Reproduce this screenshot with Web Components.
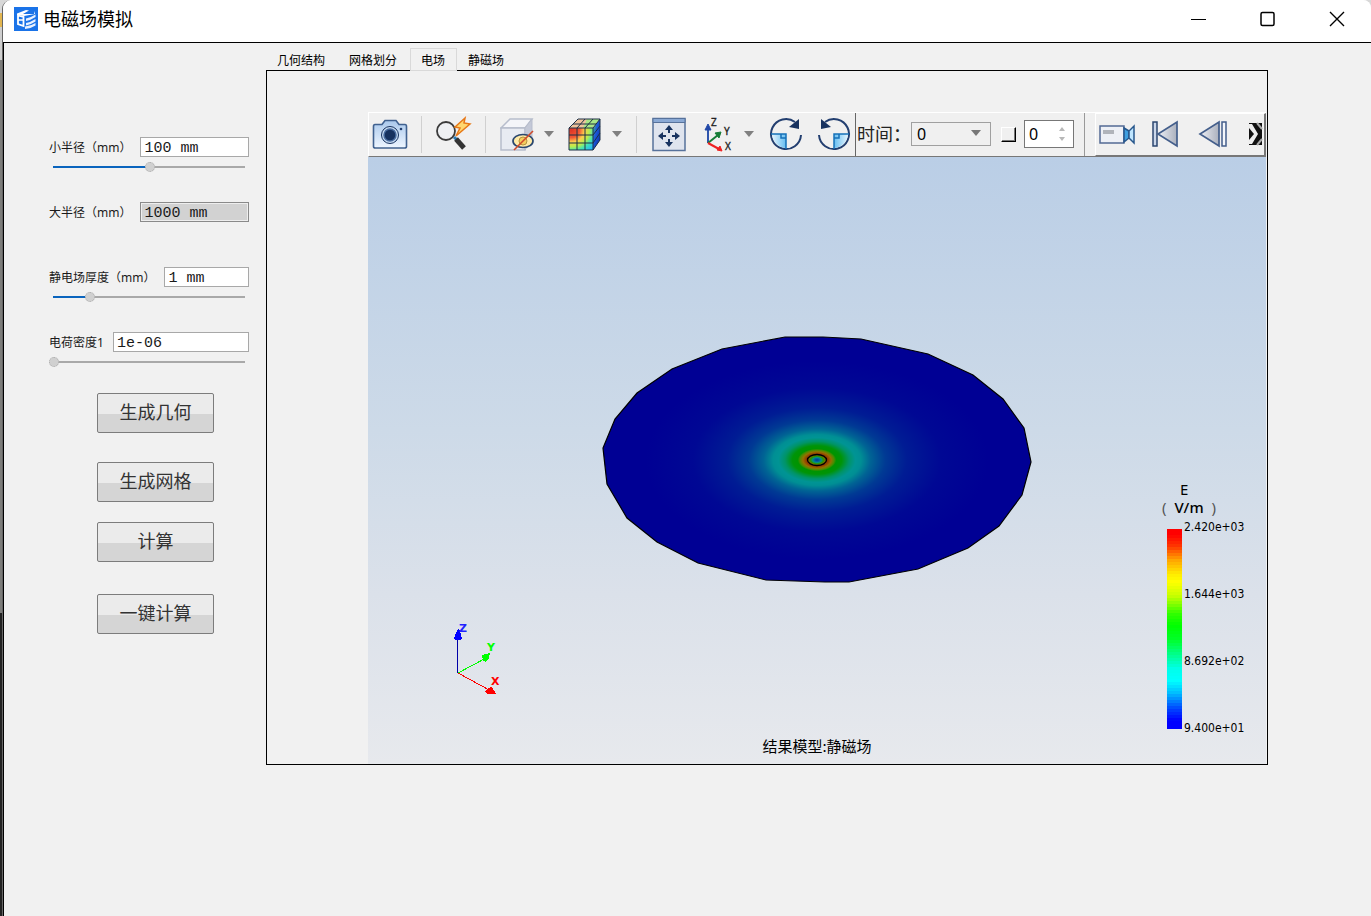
<!DOCTYPE html>
<html lang="zh-CN">
<head>
<meta charset="utf-8">
<title>电磁场模拟</title>
<style>
html, body { margin: 0; min-height: 100vh; }
body {
  display: flex;
  font-family: "Noto Sans", "Noto Sans CJK SC", sans-serif;
  font-size: 12px;
  color: #1a1a1a;
  background: linear-gradient(#d8d8d8 0 13px, #e3b650 13px 27px, #cfcfcf 27px 60px, #7d7d7b 60px 613px, #222 613px);
}
app-window { flex: 1; margin-left: 2px; }
</style>
</head>
<body>
<app-window heading="电磁场模拟">
  <control-panel slot="side">
    <number-field label="小半径（mm）" value="100 mm" position="96"></number-field>
    <number-field label="大半径（mm）" value="1000 mm" readonly></number-field>
    <number-field label="静电场厚度（mm）" value="1 mm" position="36"></number-field>
    <number-field label="电荷密度1" value="1e-06" position="0"></number-field>
    <push-button slot="actions">生成几何</push-button>
    <push-button slot="actions" style="--space:29px">生成网格</push-button>
    <push-button slot="actions" style="--space:20px">计算</push-button>
    <push-button slot="actions" style="--space:32px">一键计算</push-button>
  </control-panel>
  <tab-panel tabs="几何结构,网格划分,电场,静磁场" active="2">
    <view-toolbar></view-toolbar>
    <result-view>
      <color-legend slot="legend" values="2.420e+03,1.644e+03,8.692e+02,9.400e+01"></color-legend>
      <span slot="caption">结果模型:静磁场</span>
    </result-view>
  </tab-panel>
</app-window>

<script>
class Base extends HTMLElement {
  connectedCallback() {
    if (this.shadowRoot) return;
    const root = this.attachShadow({ mode: 'open' });
    root.innerHTML = '<style>*{box-sizing:border-box}button,input,select{font:inherit;color:inherit;margin:0}svg{display:block}' + this.css() + '</style>' + this.html();
  }
}

customElements.define('app-window', class extends Base {
  css() { return `
    :host { display:flex; flex-direction:column; min-height:100vh; box-sizing:border-box; background:#f1f1f1; border-left:1px solid #666; border-radius:9px 8px 0 0; overflow:hidden; }
    header { display:flex; align-items:center; height:42px; background:#fff; padding-left:11px; box-sizing:content-box; border-bottom:1px solid #000; }
    h1 { flex:1; margin:0 0 4px 5px; font-size:18px; line-height:24px; font-weight:400; color:#000; }
    .logo { margin-bottom:4px; }
    header button { width:69px; height:38px; margin-bottom:4px; padding:0; border:0; background:none; display:grid; place-items:center; }
    main { flex:1; display:flex; align-items:flex-start; border-left:1px solid #000; }
    .side { width:262px; }
    .content { flex:1; min-width:0; margin:5px 103px 0 0; }
  `; }
  html() { return `
    <header>
      <svg class="logo" width="24" height="24" viewBox="0 0 24 24"><rect width="24" height="24" fill="#1a73e8"/><path d="M3 6.500 12 3l3 .5-6 3.500h11l1-3v3L10 9 3 8z" fill="#fff"/><path d="M4 8.500 9.500 10v9L4 17z" fill="none" stroke="#fff" stroke-width="1.800"/><path d="M4 13h5" stroke="#fff" stroke-width="1.500"/><path d="M12 11.500q5-1 9.500-4v2.500q-4.500 3-9.500 4zM12 16q5-1 9.500-4v2.500q-4.500 3-9.500 4zM11 19.500q6-.5 10.500-3.500v2.500q-4.500 3-10.500 3.500z" fill="#e8f1ff"/></svg>
      <h1>${this.getAttribute('heading')}</h1>
      <button aria-label="最小化"><svg width="16" height="16" viewBox="0 0 16 16"><path d="M0 8.500h15" stroke="#000"/></svg></button>
      <button aria-label="最大化"><svg width="16" height="16" viewBox="0 0 16 16"><rect x="1" y="1.500" width="13" height="13" rx="1.500" fill="none" stroke="#000" stroke-width="1.500"/></svg></button>
      <button aria-label="关闭"><svg width="16" height="16" viewBox="0 0 16 16"><path d="m1 1 14 14M15 1 1 15" stroke="#000" stroke-width="1.400"/></svg></button>
    </header>
    <main><div class="side"><slot name="side"></slot></div><div class="content"><slot></slot></div></main>`; }
});

customElements.define('control-panel', class extends Base {
  css() { return `
    :host { display:block; padding:94px 17px 0 45px; }
    .actions { display:flex; flex-direction:column; align-items:center; padding:0 0 0 13px; margin-top:-4px; }
  `; }
  html() { return '<slot></slot><div class="actions"><slot name="actions"></slot></div>'; }
});

customElements.define('number-field', class extends Base {
  css() { return `
    :host { display:block; height:65px; }
    .row { display:flex; align-items:flex-start; gap:9px; }
    label { line-height:20px; white-space:nowrap; padding-top:1px; }
    .text { flex:1; min-width:0; height:20px; border:1px solid #a8a8a8; border-radius:0; background:#fff; padding:3px 3px 0; font:15px/17px "Liberation Mono","Noto Sans CJK SC",monospace; outline:0; }
    .text:read-only { background:#d2d2d2; border-color:#8a8a8a; box-shadow:inset 0 0 0 1px #eee; }
    .range { appearance:none; display:block; width:100%; height:12px; margin-top:3px; outline:0;
      background:linear-gradient(#0a64bd,#0a64bd) 4px 5px / var(--fill) 2px no-repeat, linear-gradient(#a9a9a9,#a9a9a9) 4px 5px / calc(100% - 8px) 2px no-repeat; }
    .range::-webkit-slider-thumb { appearance:none; width:10px; height:10px; border:1px dotted #aaa; border-radius:50%; background:#d0d0d0; }
  `; }
  html() {
    const ro = this.hasAttribute('readonly'), pos = this.getAttribute('position');
    return `<div class="row"><label for="v">${this.getAttribute('label')}</label><input class="text" id="v" value="${this.getAttribute('value')}" ${ro ? 'readonly' : ''}></div>` +
      (pos === null ? '' : `<input class="range" type="range" min="0" max="190" value="${pos}" aria-label="${this.getAttribute('label')}" style="--fill:${pos}px">`);
  }
});

customElements.define('push-button', class extends Base {
  css() { return `
    :host { display:block; margin-top:var(--space,0); }
    button { width:117px; height:40px; padding:0 0 2px; border:1px solid #7c7c7c; border-radius:2px; font-size:18px; line-height:24px; color:#333; background:linear-gradient(#ebebeb 0 52%, #d5d5d5 52%); }
  `; }
  html() { return '<button><slot></slot></button>'; }
});

customElements.define('tab-panel', class extends Base {
  css() { return `
    :host { display:block; }
    nav { display:flex; height:22px; }
    nav button { padding:2px 13px 0 11px; height:23px; border:0; background:none; line-height:21px; white-space:nowrap; color:#000; }
    nav button[aria-selected=true] { position:relative; padding:1px 11px 0 10px; border:1px solid #d9d9d9; background:#f1f1f1; }
    .frame { border:1px solid #000; padding:41px 1px 0 101px; }
  `; }
  html() {
    const active = +this.getAttribute('active');
    return `<nav role="tablist">${this.getAttribute('tabs').split(',').map((t, i) => `<button role="tab" aria-selected="${i === active}">${t}</button>`).join('')}</nav><div class="frame"><slot></slot></div>`;
  }
});

customElements.define('view-toolbar', class extends Base {
  css() { return `
    :host { display:flex; align-items:center; height:45px; box-sizing:border-box; border:solid; border-width:1px 0 1px 1px; border-color:#fff #fff #777 #fff; background:#f0f0f0; overflow:hidden; }
    button, label, .field { margin-bottom:2px; }
    button { flex:none; width:36px; height:36px; padding:0; border:0; background:none; }
    .cam { margin-left:3px; }
    .caret { width:26px; display:grid; place-items:center; margin-right:6px; }
    .gap { margin-right:12px; }
    hr { flex:none; width:1px; height:37px; border:0; margin:0 14px 0 13px; background:#d0d0d0; }
    .caret + hr { margin:0 15px 0 0; }
    hr.line { height:100%; margin:0 1px 0 3px; background:#666; }
    hr.thin { height:100%; margin:0 10px; background:#999; }
    label { font-size:18px; line-height:24px; white-space:nowrap; color:#222; }
    .field { position:relative; flex:none; font-size:16px; color:#000; }
    .field svg { position:absolute; pointer-events:none; }
    select { appearance:none; display:block; width:80px; height:24px; padding:0 5px; border:1px solid #a0a0a0; border-radius:0; background:#f0f0f0; }
    .field.pick svg { right:9px; top:8px; }
    .tick { appearance:none; flex:none; width:15px; height:15px; margin:0 8px 0 10px; border:solid; border-width:1px; border-color:#fff #000 #000 #fff; box-shadow:inset -1px -1px #777; background:#f0f0f0; }
    .num { display:block; width:50px; height:28px; padding:0 4px; border:1px solid #777; background:#fff; appearance:textfield; }
    .num::-webkit-inner-spin-button { appearance:none; }
    .field.spin svg { right:8px; top:6px; }
    .player { flex:1; min-width:0; height:43px; display:flex; align-items:center; gap:12px; padding-left:3px; overflow:hidden; border:solid; border-width:1px 2px 1px 1px; border-color:#fff #777 #777 #fff; }
  `; }
  html() {
    const navy = '#233f70';
    const btn = (label, body, cls = '') => `<button class="${cls}" aria-label="${label}"><svg width="36" height="36" viewBox="0 0 36 36" fill="none">${body}</svg></button>`;
    const caret = '<button class="caret" aria-label="更多"><svg width="12" height="6" viewBox="0 0 12 6"><path d="M1 0h10L6 6z" fill="#808080"/></svg></button>';
    const turn = `<path d="M33 19A15 15 0 1 1 27 6" stroke="${navy}" stroke-width="2"/><path d="M31 3v10l-10-2z" fill="#17325f"/><path d="M4 18h14v14A15 15 0 0 1 4 18z" fill="url(#ice)"/><path d="M3 18h15v15M13 18v4h5" stroke="#1671b8" stroke-width="1.500"/>`;
    return `
    <svg width="0" height="0" style="position:absolute"><defs>
      <linearGradient id="ice"><stop stop-color="#e4f5ff"/><stop offset="1" stop-color="#66bdf0"/></linearGradient>
      <linearGradient id="steel"><stop stop-color="#eef0f5"/><stop offset="1" stop-color="#aab0bd"/></linearGradient>
      <linearGradient id="cam" x2="0" y2="1"><stop stop-color="#a9c8ec"/><stop offset="1" stop-color="#eef6ff"/></linearGradient>
      <radialGradient id="heat" cx=".1" cy=".1" r="1.200"><stop stop-color="#df3527"/><stop offset=".28" stop-color="#f25834"/><stop offset=".45" stop-color="#ffce4c"/><stop offset=".62" stop-color="#b7ef4d"/><stop offset=".78" stop-color="#41e3b5"/><stop offset="1" stop-color="#20b4ff"/></radialGradient>
      <linearGradient id="cool" y2="1"><stop stop-color="#5ddc55"/><stop offset=".4" stop-color="#1d5cdb"/><stop offset="1" stop-color="#0726a5"/></linearGradient>
    </defs></svg>
    ${btn('截图', `<path d="M3 8.500h7l3-4h11l3 4h6q1.500 0 1.500 2v20q0 1.500-2 1.500h-29q-2 0-2-1.500v-20q0-2 1.500-2z" fill="url(#cam)" stroke="#40618f" stroke-width="1.600"/><circle cx="18" cy="19" r="8.500" fill="#c7dcf3" stroke="#17325f"/><circle cx="18" cy="19" r="6" fill="#17325f" stroke="#486b9e" stroke-width="1.500"/><circle cx="29" cy="13" r="1.300" fill="${navy}"/>`, 'cam')}
    <hr>
    ${btn('快速缩放', '<path d="m18 21 4 4" stroke="#287bb6" stroke-width="3"/><path d="m20 23 8 9" stroke="#333" stroke-width="5"/><circle cx="10" cy="15" r="9" fill="#eef0f3" stroke="#3b3b3b" stroke-width="1.800"/><path d="M29 2 19 11l5 1-4 8 14-12-6-1z" fill="#ffd76f" stroke="#e77817" stroke-width="1.500"/>')}
    <hr>
    ${btn('隐藏', '<path d="m1 12 9-9h22l-7 9z" fill="#f4f5f9" stroke="#b7bdcc" stroke-width="1.500"/><path d="M1 12h24v22H1z" fill="#e8ebf2" stroke="#b7bdcc" stroke-width="1.500"/><path d="m25 12 7-9v20l-7 11z" fill="#c3c8d7" stroke="#b7bdcc"/><ellipse cx="23" cy="25" rx="10" ry="6.500" fill="#ffeaa7" stroke="#29466f" stroke-width="1.700"/><circle cx="23" cy="25" r="4" fill="#f4cd5d" stroke="#b49344"/><path d="m14 34 19-19" stroke="#cf4a2c" stroke-width="1.600"/>')}
    ${caret}
    ${btn('云图', '<path d="M1 12 10 3h22l-8 9z" fill="#efc39c"/><path d="M19 3h13l-8 9h-9z" fill="#a8e887"/><path d="M1 12h24v22H1z" fill="url(#heat)"/><path d="m25 12 7-9v21l-7 10z" fill="url(#cool)"/><path d="M1 12h24v22H1zM1 12l9-9h22v21l-7 10M25 12l7-9M9 12v22M17 12v22M1 19h24l7-9M1 27h24l7-10M9 12l8-9M17 12l8-9M5 8h23" stroke="#1e3046"/>')}
    ${caret}
    <hr>
    ${btn('适应窗口', '<path d="M1 2.500h32v32H1z" fill="#dfe4ee" stroke="#57729b" stroke-width="1.500"/><path d="M1 2.500h32v4H1z" fill="#8aa9d5" stroke="#57729b"/><path d="M9 20h5M20 20h5M17 12v5M17 23v5" stroke="#17325f" stroke-width="2"/><path d="m6 20 5-4v8zM28 20l-5-4v8zM17 9l-4 5h8zM17 31l-4-5h8z" fill="#17325f"/>', 'gap')}
    ${btn('视图方向', '<path d="M8 27V12" stroke="#2f55ad" stroke-width="2"/><path d="m5 14 3-6 3 6z" fill="#2248a8" stroke="#2248a8"/><path d="m8 27 10-8" stroke="#177d37" stroke-width="2"/><path d="m15 17 6-1-2 6z" fill="#177d37" stroke="#177d37"/><path d="m8 27 11 6" stroke="#e22" stroke-width="2"/><path d="m17 34 5 1-2-5z" fill="#e22" stroke="#e22"/><g font-family="Noto Sans,sans-serif" font-size="10" fill="#222" stroke="#222" stroke-width=".3"><text x="11" y="10">Z</text><text x="24" y="19">Y</text><text x="25" y="34">X</text></g>')}
    ${caret}
    ${btn('顺时针旋转', turn, 'gap')}
    ${btn('逆时针旋转', `<g transform="matrix(-1 0 0 1 36 0)">${turn}</g>`)}
    <hr class="line">
    <label for="time">时间：</label>
    <span class="field pick"><select id="time"><option>0</option></select><svg width="12" height="6" viewBox="0 0 12 6"><path d="M1 0h10L6 6z" fill="#777"/></svg></span>
    <input class="tick" type="checkbox" aria-label="启用步数">
    <span class="field spin"><input class="num" type="number" value="0" aria-label="步数"><svg width="8" height="16" viewBox="0 0 8 16"><path d="m1 5 3-4 3 4zM1 11l3 4 3-4z" fill="#b8b8b8"/></svg></span>
    <hr class="thin">
    <div class="player">
      ${btn('录制', '<path d="M1 10h24v17H1z" fill="#edf0f6" stroke="#536a94" stroke-width="1.500"/><path d="M4 14h11v4H4z" fill="#b0b4bb"/><path d="M25 12l5 3v7l-5 4z" fill="#3f9fe0" stroke="#27578c" stroke-width="1.500"/><path d="M35 10v17l-5-5v-7z" fill="#bfe6ff" stroke="#27578c" stroke-width="1.500"/>')}
      ${btn('首帧', '<path d="M6 6h4v24H6z" fill="#cbd7ea" stroke="#2c4770" stroke-width="1.500"/><path d="M30 6v24L11 18z" fill="url(#steel)" stroke="#435e8b" stroke-width="1.700"/>')}
      ${btn('上一帧', '<path d="M24 6v24L5 18z" fill="url(#steel)" stroke="#435e8b" stroke-width="1.700"/><path d="M27 6h4v24h-4z" fill="#f4f7fb" stroke="#435e8b" stroke-width="1.500"/>')}
      ${btn('展开', '<path d="M6 7h13v22H6z" fill="#111"/><path d="M5 8h4l6 10-6 10H5v-4l5-6-5-6z" fill="#eee"/><path d="M6 12v12l5-6z" fill="#111"/><path d="M14 7l5 6M14 29l5-6" stroke="#aaa" stroke-width="2"/>')}
    </div>`;
  }
});

customElements.define('result-view', class extends Base {
  css() { return `
    :host { display:block; position:relative; height:607px; background:linear-gradient(#bacee6, #cddae8 45%, #dbe1ea 72%, #e7e9ed); }
    .scene { width:100%; height:100%; }
    ::slotted([slot=legend]) { position:absolute; right:16px; bottom:28px; }
    .caption { position:absolute; left:0; right:0; bottom:7px; text-align:center; font-size:15px; line-height:22px; color:#000; font-family:"Noto Sans CJK SC",sans-serif; }
  `; }
  html() { return `
    <svg class="scene" viewBox="0 0 898 607" role="img" aria-label="电场分布">
      <defs><radialGradient id="field" gradientUnits="userSpaceOnUse" cx="0" cy="0" r="214" gradientTransform="translate(449 303) scale(1 .58)">
        <stop offset="0" stop-color="#003a94"/><stop offset=".012" stop-color="#0060a0"/><stop offset=".02" stop-color="#009080"/><stop offset=".03" stop-color="#2a9400"/><stop offset=".042" stop-color="#946400"/><stop offset=".05" stop-color="#943800"/><stop offset=".066" stop-color="#947000"/><stop offset=".08" stop-color="#4a8c00"/><stop offset=".09" stop-color="#009400"/><stop offset=".115" stop-color="#009408"/><stop offset=".15" stop-color="#009468"/><stop offset=".18" stop-color="#009494"/><stop offset=".205" stop-color="#008f94"/><stop offset=".25" stop-color="#006494"/><stop offset=".32" stop-color="#003a94"/><stop offset=".42" stop-color="#001c94"/><stop offset=".58" stop-color="#000894"/><stop offset=".8" stop-color="#000094"/>
      </radialGradient></defs>
      <path d="M417 180 455 180 493 182 560 197 605 218 635 242 656 271 663 305 654 338 631 369 600 391 550 412 481 425 457 425 398 423 330 406 289 385 259 361 239 327 235 291 247 262 269 236 304 212 354 192Z" fill="url(#field)" stroke="#000" stroke-width="1.200"/>
      <ellipse cx="449" cy="303" rx="9.500" ry="5.500" fill="none" stroke="#000" stroke-width="1.400"/>
      <g shape-rendering="crispEdges">
        <path d="M89.500 516V480" stroke="#0000a8"/><path d="m86 482 2-6 2-4h1l2 5 1 5-2 1h-4z" fill="#00f"/>
        <path d="m90 516 28-15" stroke="#0f0"/><path d="m114 498 8-2-1 5-3 4-3-1z" fill="#0f0"/>
        <path d="m90 516 33 18" stroke="#f00"/><path d="m120 531 4-1 4 7h-8l-3-2z" fill="#f00"/>
      </g>
      <g font-family="DejaVu Sans,sans-serif" font-weight="700" font-size="11"><text x="91" y="475" fill="#22f">Z</text><text x="119" y="494" fill="#0f0">Y</text><text x="123" y="528" fill="#f00">X</text></g>
    </svg>
    <slot name="legend"></slot>
    <div class="caption"><slot name="caption"></slot></div>`; }
});

customElements.define('color-legend', class extends Base {
  css() { return `
    :host { display:block; width:90px; color:#000; }
    .title { width:54px; margin:0 0 7px 2px; font:15px/18px "Noto Sans",sans-serif; white-space:nowrap; }
    .title div { display:flex; justify-content:space-between; }
    .title div:first-child { padding-left:18px; }
    .title b { font-weight:500; }
    .title i { font-style:normal; font-weight:400; color:#555; }
    .body { display:flex; gap:2px; padding-left:7px; }
    .bar { width:15px; height:200px; margin-top:6px; }
    ol { list-style:none; margin:-4px 0 0; padding:0; display:flex; flex-direction:column; gap:51px; font:12px/16px "DejaVu Sans Condensed","Noto Sans",sans-serif; }
  `; }
  html() {
    const stops = [[0, 255, 0, 0], [.02, 255, 0, 0], [.08, 255, 55, 0], [.15, 255, 165, 0], [.22, 255, 235, 0], [.26, 255, 255, 0], [.33, 200, 255, 0], [.42, 50, 255, 0], [.48, 0, 255, 0], [.55, 0, 255, 40], [.7, 0, 255, 235], [.76, 0, 255, 255], [.82, 0, 190, 255], [.9, 0, 70, 255], [.96, 0, 0, 255], [1, 0, 0, 255]];
    const n = 67, bands = [];
    for (let k = 0; k < n; k++) {
      const t = k / (n - 1), j = Math.max(1, stops.findIndex(s => s[0] >= t)), a = stops[j - 1], b = stops[j];
      const f = (t - a[0]) / (b[0] - a[0]);
      bands.push(`rgb(${[1, 2, 3].map(c => Math.round(a[c] + (b[c] - a[c]) * f)).join(',')}) ${k * 3}px ${k * 3 + 3}px`);
    }
    return `<div class="title"><div>E</div><div><i>(</i><b>V/m</b><i>)</i></div></div>
      <div class="body"><div class="bar" style="background:linear-gradient(${bands.join(',')})"></div>
      <ol>${this.getAttribute('values').split(',').map(v => `<li>${v}</li>`).join('')}</ol></div>`;
  }
});
</script>
</body>
</html>
